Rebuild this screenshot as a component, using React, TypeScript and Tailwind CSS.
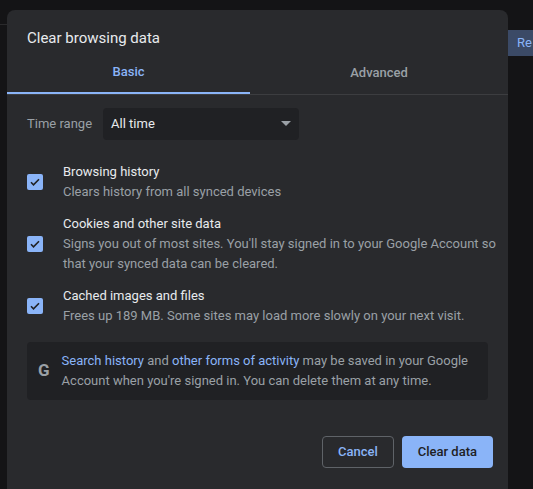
import React from 'react'

function Check() {
  return (
    <div className="w-4 h-4 rounded-[2px] bg-[#8ab4f8] flex items-center justify-center shrink-0">
      <svg width="12" height="12" viewBox="0 0 24 24" fill="none" stroke="#202124" strokeWidth="3.2">
        <path d="M4 12.5l5 5L20 6.5" />
      </svg>
    </div>
  )
}

const items = [
  { title: 'Browsing history', desc: 'Clears history from all synced devices' },
  {
    title: 'Cookies and other site data',
    desc: "Signs you out of most sites. You'll stay signed in to your Google Account so that your synced data can be cleared.",
  },
  { title: 'Cached images and files', desc: 'Frees up 189 MB. Some sites may load more slowly on your next visit.' },
]

export default function App() {
  return (
    <div className="h-[489px] w-[533px] overflow-hidden bg-[#141416] flex text-[13px]" style={{ fontFamily: 'Roboto, "Liberation Sans", sans-serif' }}>
      {/* 背景ページの切れ端 */}
      <div className="w-[7px] shrink-0 overflow-hidden">
        <div className="h-[25px] border-b border-[#2a2a2c]" />
      </div>
      <div className="w-[501px] shrink-0 mt-[10px] bg-[#292a2d] rounded-t-[8px] flex flex-col">
        <div className="px-[20px] pt-[17px] pb-[3px] text-[15px] text-[#e8eaed]">Clear browsing data</div>
        <div className="flex border-b border-[#3c3d40]">
          <div className="w-[243px] h-[41px] flex items-center justify-center text-[#8ab4f8] font-medium border-b-2 border-[#8ab4f8] -mb-px">Basic</div>
          <div className="flex-1 h-[41px] flex items-center justify-center text-[#9aa0a6] font-medium">Advanced</div>
        </div>
        <div className="flex items-center px-[20px] mt-[13px] gap-[11px]">
          <span className="text-[#9aa0a6]">Time range</span>
          <div className="w-[196px] h-[32px] rounded-[4px] bg-[#202124] flex items-center justify-between pl-[8px] pr-[8px] text-[#e8eaed]">
            <span>All time</span>
            <svg width="10" height="5" viewBox="0 0 10 5"><path d="M0 0h10L5 5z" fill="#9aa0a6" /></svg>
          </div>
        </div>
        <div className="flex flex-col gap-[12px] mt-[22px]">
          {items.map((it) => (
            <div key={it.title} className="flex items-center px-[20px]">
              <Check />
              <div className="ml-[20px] -mr-[12px] leading-[20px]">
                <div className="text-[#e8eaed]">{it.title}</div>
                <div className="text-[#9aa0a6]">{it.desc}</div>
              </div>
            </div>
          ))}
        </div>
        <div className="mx-[20px] mt-[16px] rounded-[4px] bg-[#202124] flex items-center h-[58px] pl-[11px] pr-[10px] leading-[20px]">
          <span className="w-[16px] text-[17px] font-bold text-[#9aa0a6] leading-none">G</span>
          <p className="ml-[12px] text-[#9aa0a6]">
            <span className="text-[#8ab4f8]">Search history</span> and{' '}
            <span className="text-[#8ab4f8]">other forms of activity</span> may be saved in your Google Account when you're signed in. You can delete them at any time.
          </p>
        </div>
        <div className="flex justify-end gap-[8px] px-[15px] mt-[36px]">
          <button className="h-[32px] px-[15px] rounded-[4px] border border-[#5f6368] text-[#8ab4f8] font-medium">Cancel</button>
          <button className="h-[32px] px-[16px] rounded-[4px] bg-[#8ab4f8] text-[#202124] font-medium">Clear data</button>
        </div>
      </div>
      <div className="flex-1 overflow-hidden">
        <div className="mt-[30px] h-[26px] pl-[9px] bg-[#3b4a66] text-[#8ab4f8] flex items-center whitespace-nowrap">Re</div>
      </div>
    </div>
  )
}
